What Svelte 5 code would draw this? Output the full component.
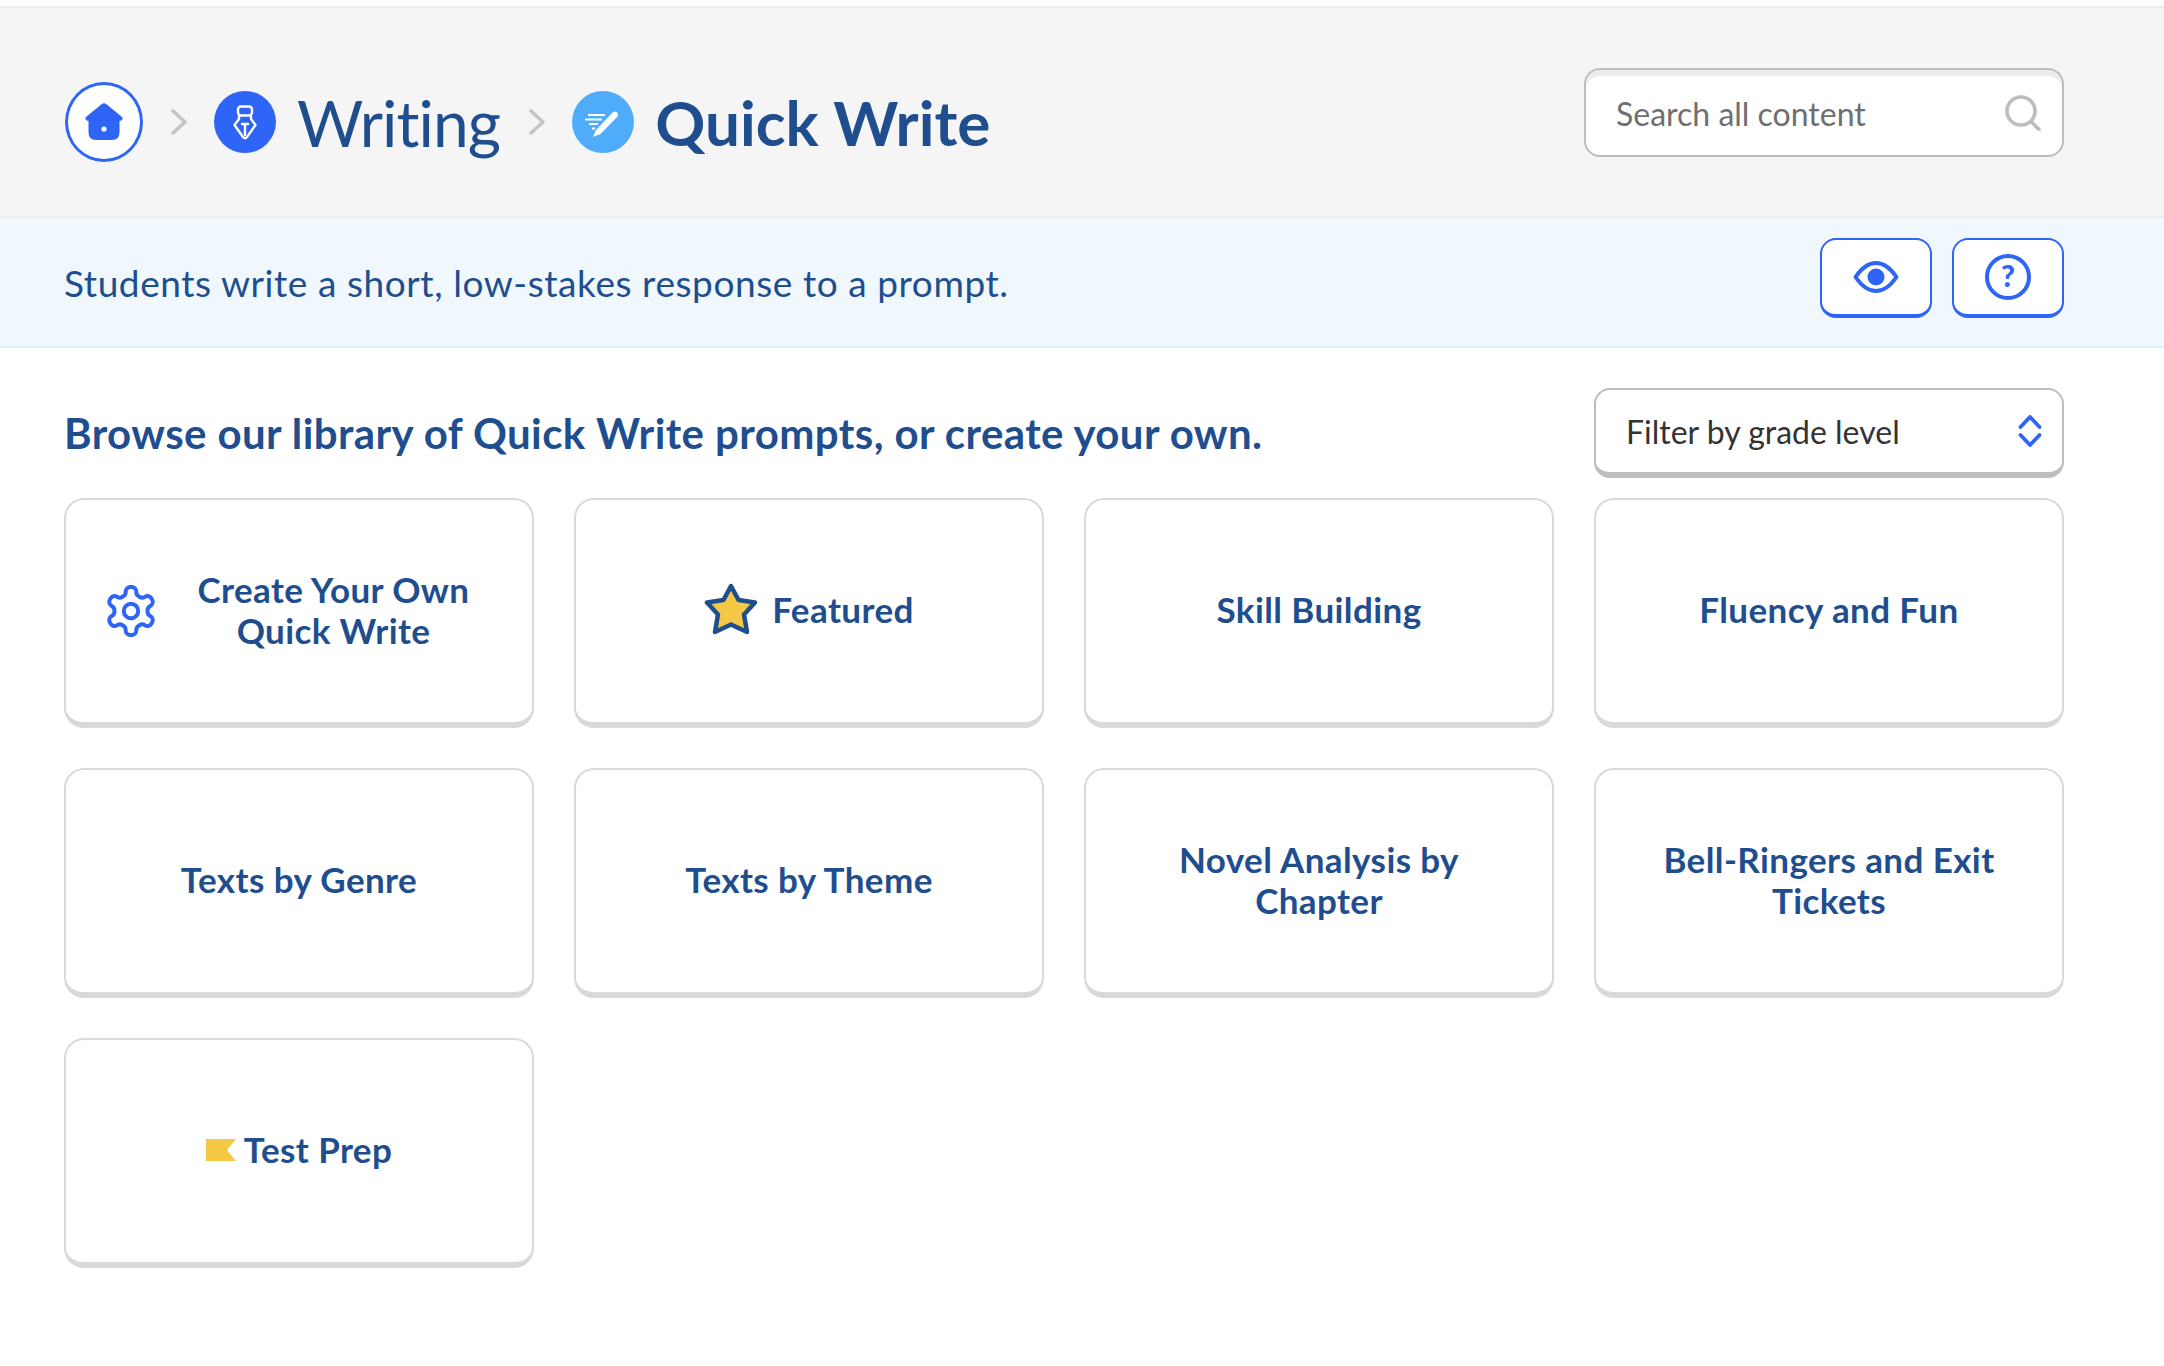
<script>
  const cards = [
    { label: 'Create Your Own Quick Write', icon: 'gear' },
    { label: 'Featured', icon: 'star' },
    { label: 'Skill Building' },
    { label: 'Fluency and Fun' },
    { label: 'Texts by Genre' },
    { label: 'Texts by Theme' },
    { label: 'Novel Analysis by Chapter' },
    { label: 'Bell-Ringers and Exit Tickets' },
    { label: 'Test Prep', icon: 'flag' }
  ];
</script>

<div class="page">
  <header class="top">
    <nav class="crumbs">
      <span class="home">
        <svg width="38" height="38" viewBox="0 0 38 38"><path fill="#2e65f6" d="M16.5 1.2Q19-.5 21.5 1.2L37 14Q39 17 35 18H34.5V29Q34.5 37 27 37H11Q3.5 37 3.5 29V18H3Q-1 17 1 14Z"/><circle cx="19" cy="26" r="2.6" fill="#fff"/></svg>
      </span>
      <svg class="chev first" width="16" height="26" viewBox="0 0 16 26"><path d="M2 2L14 13L2 24" fill="none" stroke="#c4c4c4" stroke-width="3.6" stroke-linecap="round" stroke-linejoin="round"/></svg>
      <span class="dot blue">
        <svg width="24" height="35" viewBox="0 0 24 35" fill="none" stroke="#fff" stroke-width="2.4" stroke-linecap="round" stroke-linejoin="round"><rect x="5" y="1.5" width="14" height="9" rx="3"/><path d="M6 11V14L1.5 20L10 32Q12 34.5 14 32L22.5 20L18 14V11"/><path d="M12 30V19M9 19H15"/></svg>
      </span>
      <span class="crumb">Writing</span>
      <svg class="chev" width="16" height="26" viewBox="0 0 16 26"><path d="M2 2L14 13L2 24" fill="none" stroke="#c4c4c4" stroke-width="3.6" stroke-linecap="round" stroke-linejoin="round"/></svg>
      <span class="dot sky">
        <svg width="62" height="62" viewBox="0 0 62 62" fill="none"><path d="M16 24H33M13 28.5H30M17 33H26M20 37.5H23" stroke="#fff" stroke-width="2"/><path fill="#fff" d="M21 46L24 39L40.5 21.5Q43 19.5 45 21.5Q47 24 45.5 25.5L28.5 43Z"/></svg>
      </span>
      <h1>Quick Write</h1>
    </nav>
    <div class="search">
      <span>Search all content</span>
      <svg width="36" height="36" viewBox="0 0 36 36" fill="none" stroke="#bdbdbd" stroke-width="3.6" stroke-linecap="round"><circle cx="16" cy="16" r="14"/><path d="M26.5 27L34 34.5"/></svg>
    </div>
  </header>

  <section class="info">
    <p>Students write a short, low-stakes response to a prompt.</p>
    <div class="tools">
      <button aria-label="Preview">
        <svg width="46" height="34" viewBox="0 0 46 34"><path d="M2.5 17Q12 3 23 3T43.5 17Q34 31 23 31T2.5 17Z" fill="none" stroke="#2e65f6" stroke-width="4" stroke-linejoin="round"/><circle cx="23" cy="17" r="8.5" fill="#2e65f6"/></svg>
      </button>
      <button aria-label="Help">
        <svg width="46" height="46" viewBox="0 0 46 46"><circle cx="23" cy="23" r="21" fill="none" stroke="#2e65f6" stroke-width="4"/><text x="23" y="33" text-anchor="middle" class="q">?</text></svg>
      </button>
    </div>
  </section>

  <main>
    <div class="title">
      <h2>Browse our library of Quick Write prompts, or create your own.</h2>
      <div class="filter">
        <span>Filter by grade level</span>
        <svg width="24" height="32" viewBox="0 0 24 32" fill="none" stroke="#2e65f6" stroke-width="3.8" stroke-linecap="round" stroke-linejoin="round"><path d="M2.5 12L12 2L21.5 12M2.5 20L12 30L21.5 20"/></svg>
      </div>
    </div>
    <div class="grid">
      {#each cards as c}
        <a class="card" href="#top" class:own={c.icon === 'gear'}>
          {#if c.icon === 'gear'}
            <svg class="gear" width="50" height="52" viewBox="2.4 1.2 19.2 21.6" fill="none" stroke="#2e65f6" stroke-width="1.65" stroke-linecap="round" stroke-linejoin="round"><path d="M12.22 2h-.44a2 2 0 0 0-2 2v.18a2 2 0 0 1-1 1.73l-.43.25a2 2 0 0 1-2 0l-.15-.08a2 2 0 0 0-2.73.73l-.22.38a2 2 0 0 0 .73 2.73l.15.1a2 2 0 0 1 1 1.72v.51a2 2 0 0 1-1 1.74l-.15.09a2 2 0 0 0-.73 2.73l.22.38a2 2 0 0 0 2.73.73l.15-.08a2 2 0 0 1 2 0l.43.25a2 2 0 0 1 1 1.73V20a2 2 0 0 0 2 2h.44a2 2 0 0 0 2-2v-.18a2 2 0 0 1 1-1.73l.43-.25a2 2 0 0 1 2 0l.15.08a2 2 0 0 0 2.73-.73l.22-.39a2 2 0 0 0-.73-2.73l-.15-.08a2 2 0 0 1-1-1.74v-.5a2 2 0 0 1 1-1.74l.15-.09a2 2 0 0 0 .73-2.73l-.22-.38a2 2 0 0 0-2.73-.73l-.15.08a2 2 0 0 1-2 0l-.43-.25a2 2 0 0 1-1-1.73V4a2 2 0 0 0-2-2z"/><circle cx="12" cy="12" r="3"/></svg>
          {:else if c.icon === 'star'}
            <svg class="star" width="54" height="54" viewBox="0 0 54 54"><path d="M27 3L34.5 17L51 19.500L40 31.500L43 49L27 41.500L11 49L14 31.500L3 19.500L19.500 17Z" fill="#f5c945" stroke="#1f4e8f" stroke-width="4.500" stroke-linejoin="round"/></svg>
          {:else if c.icon === 'flag'}
            <svg class="flag" width="30" height="22" viewBox="0 0 30 22"><path d="M0 0H30L21 11L30 22H0Z" fill="#f5c945"/></svg>
          {/if}
          <span class="label">{c.label}</span>
        </a>
      {/each}
    </div>
  </main>
</div>

<style>
  :global(body) {
    margin: 0;
    background: #fff;
  }
  .page {
    padding-top: 6px;
    font-family: Lato, "Open Sans", sans-serif;
    color: #1f4e8f;
  }
  .top {
    display: flex;
    justify-content: space-between;
    align-items: flex-start;
    height: 148px;
    padding: 60px 100px 0 64px;
    background: #f5f5f5;
    border-top: 2px solid #ececec;
    border-bottom: 2px solid #ececec;
  }
  .crumbs {
    display: flex;
    align-items: center;
    height: 108px;
  }
  .home {
    display: flex;
    align-items: center;
    justify-content: center;
    box-sizing: border-box;
    width: 78px;
    height: 80px;
    margin-left: 1px;
    border: 3px solid #2e65f6;
    border-radius: 50%;
    background: #fff;
  }
  .chev {
    margin: 0 27px 0 29px;
  }
  .chev.first {
    margin: 0 27px 0 28px;
  }
  .dot {
    display: flex;
    align-items: center;
    justify-content: center;
    width: 62px;
    height: 62px;
    border-radius: 50%;
    flex: none;
  }
  .blue {
    background: #2e65f6;
  }
  .sky {
    background: #4facfb;
  }
  .crumb {
    margin-left: 21px;
    font-size: 64px;
    font-weight: 400;
    letter-spacing: -0.9px;
  }
  h1 {
    margin: 0 0 0 21px;
    font-size: 62px;
    font-weight: 700;
    letter-spacing: 0;
  }
  .search {
    display: flex;
    justify-content: space-between;
    align-items: center;
    box-sizing: border-box;
    width: 480px;
    height: 89px;
    padding: 1px 21px 0 30px;
    background: #fff;
    border: 2px solid #bdbdbd;
    border-radius: 16px;
    box-shadow: inset 0 6px 0 #ececec;
    font-size: 32px;
    color: #6f6f6f;
  }
  .info {
    display: flex;
    justify-content: space-between;
    align-items: flex-start;
    height: 128px;
    padding: 0 100px 0 64px;
    background: #f0f8fe;
    border-bottom: 2px solid #dceefb;
  }
  .info p {
    margin: 43px 0 0;
    font-size: 37px;
    line-height: 44px;
    letter-spacing: 0.57px;
  }
  .tools {
    display: flex;
    gap: 20px;
    margin-top: 20px;
  }
  .tools button {
    display: flex;
    align-items: center;
    justify-content: center;
    box-sizing: border-box;
    width: 112px;
    height: 80px;
    padding: 0;
    background: #fff;
    border: 2px solid #2e65f6;
    border-bottom-width: 4px;
    border-radius: 16px;
  }
  .q {
    font-family: Lato, sans-serif;
    font-size: 30px;
    font-weight: 900;
    fill: #2e65f6;
  }
  main {
    padding: 40px 100px 0 64px;
  }
  .title {
    display: flex;
    justify-content: space-between;
    align-items: center;
    margin-bottom: 20px;
  }
  h2 {
    margin: 0;
    font-size: 42px;
    font-weight: 700;
    letter-spacing: 0.4px;
  }
  .filter {
    display: flex;
    justify-content: space-between;
    align-items: center;
    box-sizing: border-box;
    width: 470px;
    height: 90px;
    padding: 0 20px 0 30px;
    background: #fff;
    border: 2px solid #bdbdbd;
    border-bottom-width: 6px;
    border-radius: 16px;
    font-size: 32px;
    color: #333;
  }
  .grid {
    display: grid;
    grid-template-columns: repeat(4, 470px);
    grid-auto-rows: 230px;
    gap: 40px;
  }
  .card {
    display: flex;
    align-items: center;
    justify-content: center;
    box-sizing: border-box;
    padding: 0 40px 3px;
    border: 2px solid #d9d9d9;
    border-bottom-width: 6px;
    border-radius: 20px;
    background: #fff;
    color: inherit;
    font-size: 35px;
    font-weight: 700;
    letter-spacing: 0.4px;
    line-height: 41px;
    text-align: center;
    text-decoration: none;
  }
  .card.own .label {
    flex: 1;
    margin-left: 19px;
  }
  .gear {
    flex: none;
    margin-top: 2px;
  }
  .star {
    flex: none;
    margin-right: 14px;
  }
  .flag {
    flex: none;
    margin-right: 8px;
  }
</style>
